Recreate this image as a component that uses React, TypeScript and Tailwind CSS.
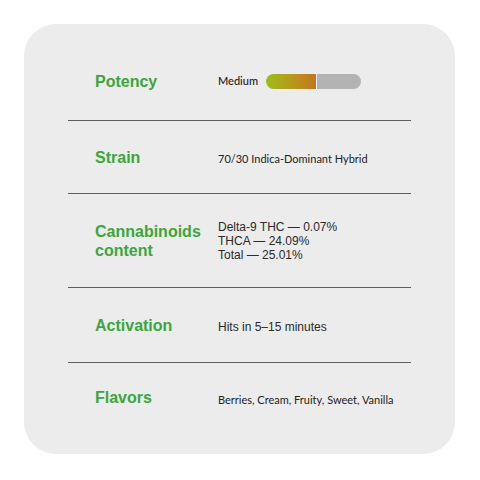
import React from 'react';

const labelClass = "w-[123px] shrink-0 font-['Liberation_Sans',Arial,sans-serif] text-[16px] font-bold leading-[19px] text-[#3ba63a]";
const humanist = "font-['Lato','Open_Sans',sans-serif] text-[11px] text-[#222]";
const grotesk = "font-['Liberation_Sans',Arial,sans-serif] text-[12px] text-[#2a2a2a]";

const Row: React.FC<{ label: React.ReactNode; h: string; first?: boolean; children: React.ReactNode }> = ({ label, h, first, children }) => (
  <div className={`flex items-center pl-[27px] ${h} ${first ? '' : 'border-t border-[#5e5e5e]'}`}>
    <div className={labelClass}>{label}</div>
    <div className="flex-1">{children}</div>
  </div>
);

export default function App() {
  return (
    <div className="w-[480px] h-[480px] bg-white p-6">
      <div className="w-[431px] h-[430px] rounded-[32px] bg-[#ececec] px-11 pt-[19px]">
        <Row label="Potency" h="h-[77px]" first>
          <div className="flex items-center gap-[8px]">
            <span className={`${humanist} text-[11.5px] font-medium`}>Medium</span>
            <div className="flex h-[15px] w-[95px] overflow-hidden rounded-full">
              <div className="w-[50px] bg-gradient-to-r from-[#9cbc1c] to-[#c5751c]" />
              <div className="w-px bg-white" />
              <div className="flex-1 bg-[#b3b3b3]" />
            </div>
          </div>
        </Row>
        <Row label="Strain" h="h-[73px]">
          <span className={humanist}>70/30 Indica-Dominant Hybrid</span>
        </Row>
        <Row label={<>Cannabinoids<br />content</>} h="h-[94px]">
          <div className={`${grotesk} leading-[14px]`}>
            <div>Delta-9 THC — 0.07%</div>
            <div>THCA — 24.09%</div>
            <div>Total — 25.01%</div>
          </div>
        </Row>
        <Row label="Activation" h="h-[75px]">
          <span className={grotesk}>Hits in 5–15 minutes</span>
        </Row>
        <Row label="Flavors" h="h-[70px]">
          <span className={humanist}>Berries, Cream, Fruity, Sweet, Vanilla</span>
        </Row>
      </div>
    </div>
  );
}
